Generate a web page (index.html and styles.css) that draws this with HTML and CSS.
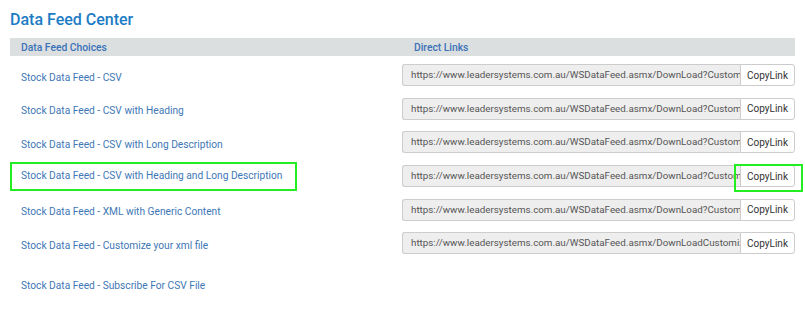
FILE: index.html
```html
<!DOCTYPE html>
<html>
<head>
<meta charset="utf-8">
<link rel="stylesheet" href="styles.css">
</head>
<body>
<div class="page">
  <h1 class="title">Data Feed Center</h1>
  <div class="table">
    <div class="head">
      <div class="hcell left">Data Feed Choices</div>
      <div class="hcell right">Direct Links</div>
    </div>
    <div class="row">
      <div class="cell left"><a class="link">Stock Data Feed - CSV</a></div>
      <div class="cell right"><div class="group"><div class="url">https://www.leadersystems.com.au/WSDataFeed.asmx/DownLoad?CustomerCode=XXXX&amp;Type=csv</div><button class="btn">CopyLink</button></div></div>
    </div>
    <div class="row">
      <div class="cell left"><a class="link">Stock Data Feed - CSV with Heading</a></div>
      <div class="cell right"><div class="group"><div class="url">https://www.leadersystems.com.au/WSDataFeed.asmx/DownLoad?CustomerCode=XXXX&amp;Type=csvh</div><button class="btn">CopyLink</button></div></div>
    </div>
    <div class="row">
      <div class="cell left"><a class="link">Stock Data Feed - CSV with Long Description</a></div>
      <div class="cell right"><div class="group"><div class="url">https://www.leadersystems.com.au/WSDataFeed.asmx/DownLoad?CustomerCode=XXXX&amp;Type=csvl</div><button class="btn">CopyLink</button></div></div>
    </div>
    <div class="row">
      <div class="cell left"><a class="link hl-link">Stock Data Feed - CSV with Heading and Long Description</a></div>
      <div class="cell right"><div class="group"><div class="url">https://www.leadersystems.com.au/WSDataFeed.asmx/DownLoad?CustomerCode=XXXX&amp;Type=csvhl</div><button class="btn hl-btn">CopyLink</button></div></div>
    </div>
    <div class="row">
      <div class="cell left"><a class="link">Stock Data Feed - XML with Generic Content</a></div>
      <div class="cell right"><div class="group"><div class="url">https://www.leadersystems.com.au/WSDataFeed.asmx/DownLoad?CustomerCode=XXXX&amp;Type=xml</div><button class="btn">CopyLink</button></div></div>
    </div>
    <div class="row">
      <div class="cell left"><a class="link">Stock Data Feed - Customize your xml file</a></div>
      <div class="cell right"><div class="group"><div class="url">https://www.leadersystems.com.au/WSDataFeed.asmx/DownLoadCustomizeXml?CustomerCode=XXXX</div><button class="btn">CopyLink</button></div></div>
    </div>
    <div class="row last">
      <div class="cell left"><a class="link">Stock Data Feed - Subscribe For CSV File</a></div>
      <div class="cell right"></div>
    </div>
  </div>
</div>
</body>
</html>
```

FILE: styles.css
```css
* { box-sizing: border-box; }
body {
  margin: 0;
  background: #ffffff;
  font-family: "Roboto", "Noto Sans", sans-serif;
}
.page {
  padding: 10px 10px 0 10px;
}
.title {
  margin: 0;
  font-size: 16px;
  line-height: 20px;
  font-weight: 500;
  color: #1c7cc4;
}
.table {
  margin-top: 8px;
  width: 785px;
}
.head {
  display: grid;
  grid-template-columns: 392px 393px;
  background: #dcdfe0;
  height: 18px;
  align-items: center;
}
.hcell {
  font-size: 10.3px;
  font-weight: 500;
  color: #3a72b8;
}
.hcell.left { padding-left: 11px; }
.hcell.right { padding-left: 12px; }
.row {
  display: grid;
  grid-template-columns: 392px 393px;
  height: 33.6px;
  align-items: center;
}
.head + .row { margin-top: 2.5px; }
.row.last { height: 47px; }
.cell.left { padding-left: 11px; }
.link {
  display: inline-block;
  font-size: 10.2px;
  color: #3e77b6;
  line-height: 14px;
  text-decoration: none;
}
.hl-link {
  margin-left: -10px;
  padding: 6px 14px 7px 10px;
  outline: 2px solid #22ee22;
  outline-offset: -1px;
}
.group {
  display: flex;
  height: 22px;
  width: 393px;
}
.url {
  flex: 0 0 338px;
  height: 22px;
  background: #eeeeee;
  border: 1px solid #cccccc;
  border-right: none;
  border-radius: 3px 0 0 3px;
  font-size: 9.8px;
  line-height: 20px;
  color: #555555;
  padding-left: 8px;
  white-space: nowrap;
  overflow: hidden;
}
.btn {
  flex: 0 0 55px;
  height: 22px;
  background: #ffffff;
  border: 1px solid #cccccc;
  border-radius: 0 3px 3px 0;
  font-family: inherit;
  font-size: 10px;
  color: #333333;
  padding: 0;
}
.hl-btn {
  position: relative;
}
.hl-btn::after {
  content: "";
  position: absolute;
  top: -2px;
  left: -7px;
  right: -9px;
  bottom: -6px;
  border: 2px solid #22ee22;
}
```
